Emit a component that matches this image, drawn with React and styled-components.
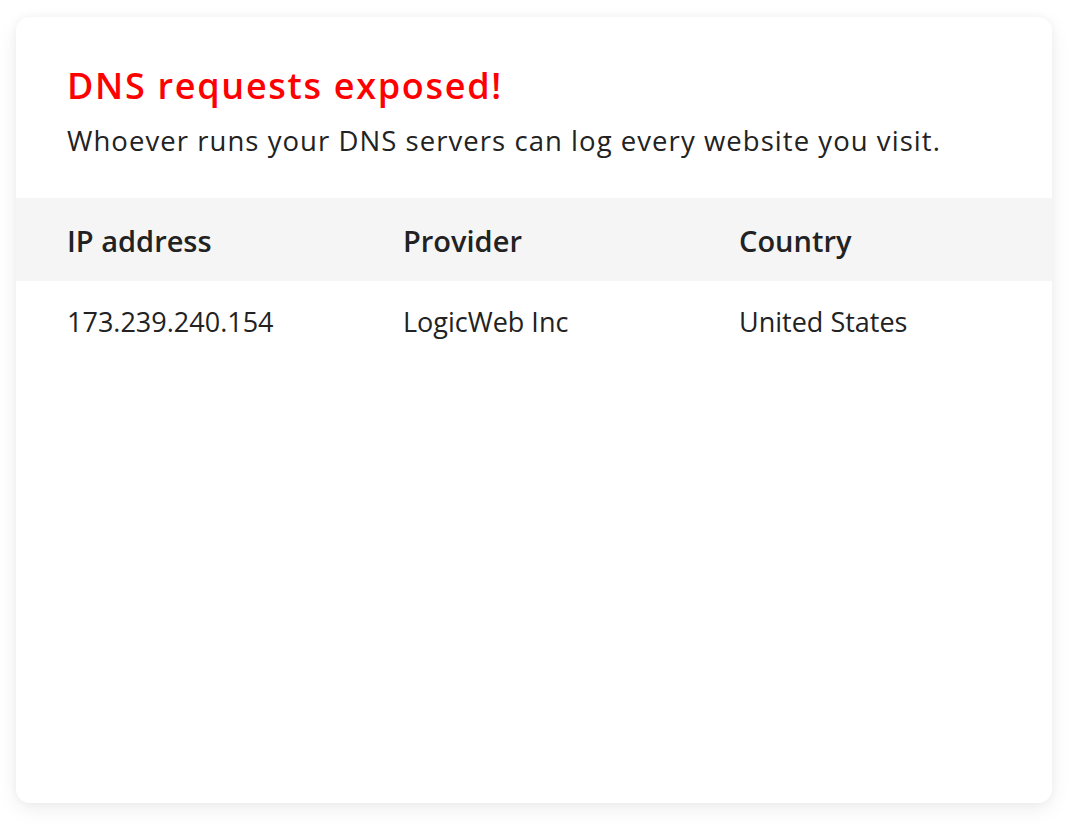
import React from "react";
import styled, { createGlobalStyle } from "styled-components";

const Global = createGlobalStyle`
  html, body { margin: 0; padding: 0; background: #ffffff; }
  body { font-family: "Open Sans", "Lato", sans-serif; -webkit-font-smoothing: antialiased; }
`;

const Page = styled.div`
  padding: 17px 16px 24px 16px;
`;

const Card = styled.div`
  background: #fff;
  border-radius: 14px;
  box-shadow: 0 6px 20px rgba(0, 0, 0, 0.07), 0 0 8px rgba(0, 0, 0, 0.04);
  height: 786px;
  overflow: hidden;
`;

const Intro = styled.div`
  padding: 47px 51px 39px;
`;

const Title = styled.h1`
  margin: 0;
  color: #ff0000;
  font-size: 36px;
  font-weight: 600;
  line-height: 44px;
  letter-spacing: 1.7px;
`;

const Subtitle = styled.p`
  margin: 15px 0 0;
  color: #222;
  font-size: 27.5px;
  line-height: 36px;
  font-weight: 400;
  letter-spacing: 1.05px;
`;

const Row = styled.div`
  display: grid;
  grid-template-columns: 336px 336px 1fr;
  padding: 0 51px;
  height: ${(p) => p.$h}px;
  align-items: center;
  background: ${(p) => (p.$head ? "#f5f5f5" : "#fff")};
`;

const Cell = styled.div`
  color: #222;
  line-height: 1;
  font-size: ${(p) => (p.$head ? 29 : 27)}px;
  font-weight: ${(p) => (p.$head ? 600 : 500)};
  padding-top: ${(p) => (p.$head ? 2 : 0)}px;
`;

export default function App() {
  return (
    <>
      <Global />
      <Page>
        <Card>
          <Intro>
            <Title>DNS requests exposed!</Title>
            <Subtitle>Whoever runs your DNS servers can log every website you visit.</Subtitle>
          </Intro>
          <Row $head $h={83}>
            <Cell $head>IP address</Cell>
            <Cell $head>Provider</Cell>
            <Cell $head>Country</Cell>
          </Row>
          <Row $h={80}>
            <Cell>173.239.240.154</Cell>
            <Cell>LogicWeb Inc</Cell>
            <Cell>United States</Cell>
          </Row>
        </Card>
      </Page>
    </>
  );
}
